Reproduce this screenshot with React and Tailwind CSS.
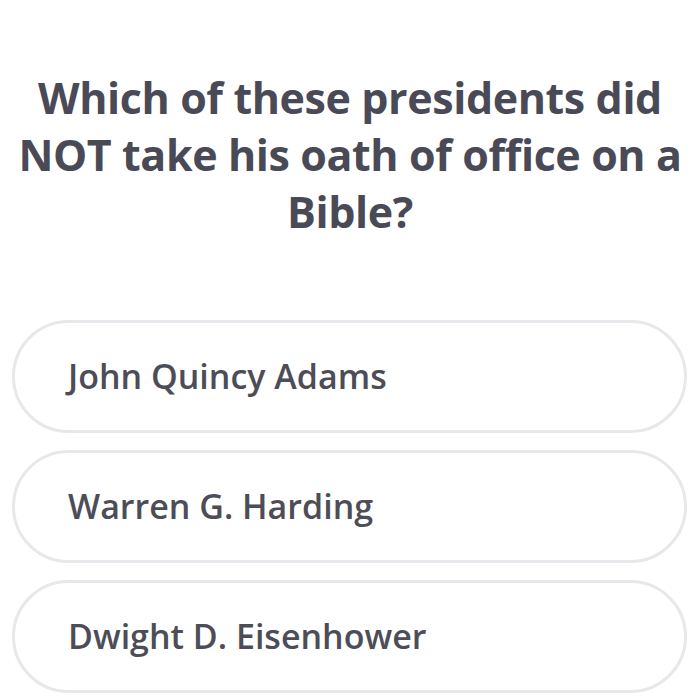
export default function App() {
  const options = ["John Quincy Adams", "Warren G. Harding", "Dwight D. Eisenhower"];

  return (
    <div
      className="w-[700px] h-[700px] bg-white overflow-hidden flex flex-col"
      style={{ fontFamily: "'Open Sans', 'Noto Sans', sans-serif" }}
    >
      {/* Question */}
      <div className="pt-[69px]">
        <h1 className="text-center font-bold text-[43px] leading-[57px] tracking-[-0.4px] text-[#4a4a57] whitespace-nowrap">
          Which of these presidents did
          <br />
          NOT take his oath of office on a
          <br />
          Bible?
        </h1>
      </div>

      {/* Answers */}
      <div className="flex flex-col gap-[17px] px-[12px] mt-[80px]">
        {options.map((opt) => (
          <button
            key={opt}
            className="h-[113px] w-[675px] rounded-full border-[3px] border-[#e8e8ec] bg-white text-left pl-[53px] text-[34px] font-semibold text-[#4d4d58]"
          >
            {opt}
          </button>
        ))}
      </div>
    </div>
  );
}
